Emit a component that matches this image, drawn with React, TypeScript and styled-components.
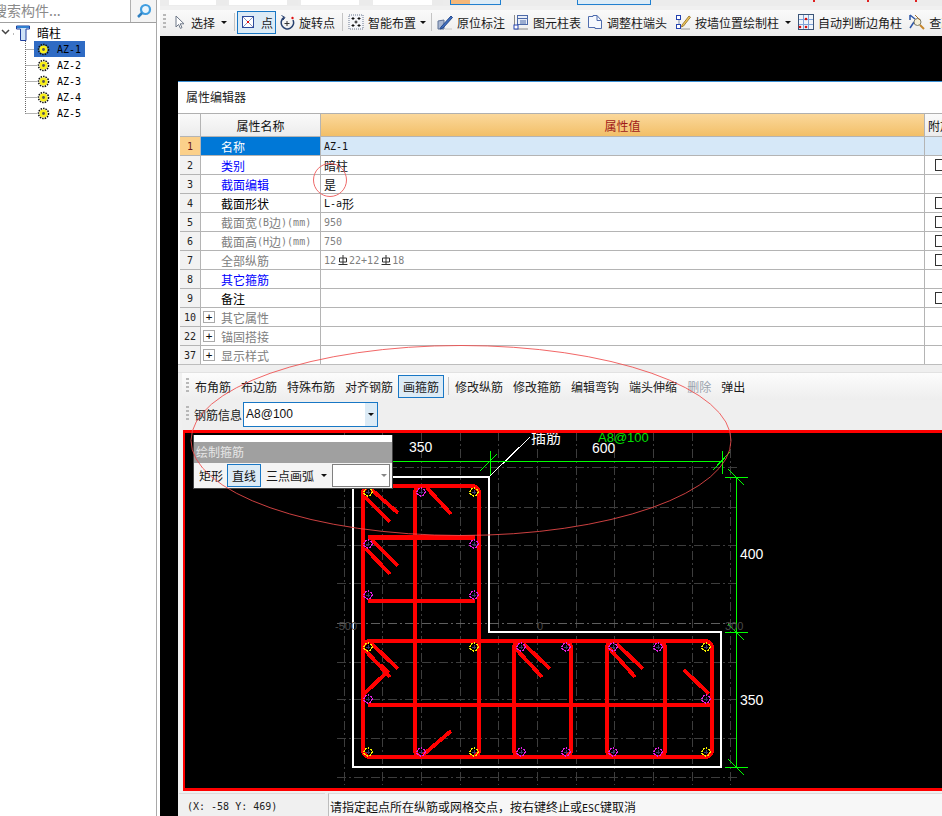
import React from "react";
import styled, { createGlobalStyle } from "styled-components";

const cjk = '"Noto Sans CJK SC", "Liberation Sans", sans-serif';
const mono = '"DejaVu Sans Mono", "Liberation Mono", monospace';

const Global = createGlobalStyle`
  html, body { margin: 0; padding: 0; background: #000; }
  body { font-family: ${cjk}; font-size: 12px; color: #111; }
`;

const Page = styled.div`
  position: relative; display: flex; width: 942px; height: 816px; overflow: hidden; background: #fff;
`;
const Sidebar = styled.aside`
  width: 156px; flex: none; display: flex; flex-direction: column; border-right: 1px solid #a9a9a9; margin-right: 3px; background: #fff;
`;
const SearchBar = styled.div`
  height: 22px; flex: none; display: flex; border-bottom: 1px solid #a0a0a0; overflow: hidden;
`;
const SearchHint = styled.span`
  flex: 1; margin-left: -7px; font-size: 14px; line-height: 20px; color: #8a8a8a; white-space: nowrap;
`;
const SearchButton = styled.div`
  width: 25px; flex: none; display: flex; align-items: center; justify-content: center; border-left: 1px solid #b0b0b0; background: #f4f4f4;
`;
const Tree = styled.div`
  display: flex; flex-direction: column; padding-top: 1px;
`;
const TreeRoot = styled.div`
  height: 17px; display: flex; align-items: center; font-size: 12px; color: #000;
`;
const TreeRootLabel = styled.span`
  margin-left: 3px;
`;
const TreeRow = styled.div`
  height: 16px; display: flex; align-items: center; padding-left: 25px;
`;
const ConnectorSvg = styled.svg`
  flex: none; margin-right: -7px;
`;
const TreeLabel = styled.span<{ $active?: boolean }>`
  width: 51px; height: 16px; display: flex; align-items: center; gap: 7px; padding-left: 3px; box-sizing: border-box;
  font-family: ${mono}; font-size: 10px; color: #000; background: ${p => (p.$active ? "#2f6bc4" : "transparent")};
`;
const GearSvg = styled.svg`
  flex: none;
`;

const Main = styled.main`
  flex: 1; min-width: 0; display: flex; flex-direction: column; background: #f0f0f0;
`;
const TopStrip = styled.div`
  height: 6px; flex: none; display: flex; align-items: flex-start; padding-left: 9px; background: #ececec; overflow: hidden; margin-bottom: 4px;
`;
const StripBox = styled.div<{ $w: number; $ml?: number }>`
  width: ${p => p.$w}px; height: 5px; margin-left: ${p => p.$ml ?? 2}px; flex: none; background: #fff; display: flex; justify-content: flex-end;
  &::after { content: ""; width: 11px; height: 5px; background: #ebebeb; }
`;
const StripActive = styled.div<{ $w: number; $ml: number; $orange?: boolean }>`
  width: ${p => p.$w}px; height: 5px; margin-left: ${p => p.$ml}px; flex: none; box-sizing: border-box;
  border: 1px solid #1f7fd0; border-top: 0; background: #dcebf6; display: flex;
  &::before { content: ""; width: ${p => (p.$orange ? "19px" : "0")}; background: #f5b778; }
`;
const StripMark = styled.i<{ $ml: number; $c: string }>`
  width: 2px; height: 2px; margin-left: ${p => p.$ml}px; flex: none; background: ${p => p.$c};
`;
const Toolbar = styled.div`
  height: 26px; flex: none; box-sizing: border-box; padding-bottom: 2px; display: flex; align-items: center; white-space: nowrap; overflow: hidden;
  background: linear-gradient(#fafafa, #ececec); font-size: 12px; color: #1a1a1a;
`;
const Grip = styled.i<{ $ml: number }>`
  width: 3px; height: 16px; margin-left: ${p => p.$ml}px; flex: none;
  background: repeating-linear-gradient(#b8b8b8 0 2px, transparent 2px 4px);
`;
const Tool = styled.div<{ $ml?: number }>`
  display: flex; align-items: center; gap: 4px; flex: none; margin-left: ${p => p.$ml ?? 0}px;
`;
const IconBox = styled.svg`
  width: 16px; height: 16px; flex: none; display: block;
`;
const Caret = styled.i<{ $ml?: number }>`
  width: 0; height: 0; flex: none; margin-left: ${p => p.$ml ?? 0}px;
  border-left: 3px solid transparent; border-right: 3px solid transparent; border-top: 3px solid #111;
`;
const Sep = styled.i<{ $ml: number }>`
  width: 1px; height: 18px; flex: none; margin-left: ${p => p.$ml}px; background: #c4c4c4;
`;
const PressedTool = styled.div<{ $w: number; $ml: number; $h?: number }>`
  width: ${p => p.$w}px; height: ${p => p.$h ?? 23}px; margin-left: ${p => p.$ml}px; flex: none; box-sizing: border-box;
  display: flex; align-items: center; justify-content: center; gap: 5px;
  border: 1px solid #1877c5; background: #dcebf6;
`;

const Workspace = styled.div`
  flex: 1; min-height: 0; background: #000; padding: 45px 0 0 18px; overflow: hidden;
`;
const Dialog = styled.section`
  width: 764px; height: 735px; display: flex; flex-direction: column; box-sizing: border-box;
  border-top: 1px solid #3b8fd4; background: #f0f0f0;
`;
const DialogTitle = styled.div`
  height: 31px; flex: none; padding-left: 8px; background: #fff; font-size: 12px; line-height: 30px; color: #222;
`;
const Table = styled.div`
  height: 251px; flex: none; padding-left: 2px; background: #fff; border-top: 1px solid #b0b0b0; box-sizing: border-box; overflow: hidden;
`;
const Row = styled.div<{ $head?: boolean }>`
  height: ${p => (p.$head ? 23 : 19)}px; display: grid; grid-template-columns: 21px 120px 604px 30px;
`;
const Cell = styled.div`
  min-width: 0; display: flex; align-items: center; box-sizing: border-box; white-space: nowrap; overflow: hidden;
  border-right: 1px solid #b4b4b4; border-bottom: 1px solid #b4b4b4;
`;
const NumCell = styled(Cell)<{ $active?: boolean }>`
  justify-content: center; font-family: ${mono}; font-size: 10px;
  color: ${p => (p.$active ? "#6a1b1b" : "#222")}; background: ${p => (p.$active ? "#fbd08a" : "#f2f2f2")};
`;
const HeadCell = styled(Cell)<{ $orange?: boolean }>`
  justify-content: center; font-size: 12px; color: ${p => (p.$orange ? "#a01a1a" : "#111")};
  background: ${p => (p.$orange ? "linear-gradient(#fbd89b, #f2bf68)" : "linear-gradient(#fafafa, #ececec)")};
`;
const AttachHead = styled(HeadCell)`
  justify-content: flex-start; padding-left: 3px;
`;
const NameCell = styled(Cell)<{ $color: string; $active?: boolean }>`
  padding-left: 20px; font-size: 12px; color: ${p => (p.$active ? "#fff" : p.$color)};
  background: ${p => (p.$active ? "#0078d7" : "#fff")};
`;
const GroupCell = styled(Cell)`
  padding-left: 2px; gap: 6px; font-size: 12px; color: #808080;
`;
const PlusBox = styled.span`
  width: 12px; height: 12px; flex: none; display: flex; align-items: center; justify-content: center; box-sizing: border-box;
  border: 1px solid #aaa; font-family: ${mono}; font-size: 11px; line-height: 1; color: #111; background: #fff;
`;
const ValueCell = styled(Cell)<{ $muted?: boolean; $active?: boolean }>`
  padding-left: 3px; font-size: 12px; color: ${p => (p.$muted ? "#808080" : "#111")};
  background: ${p => (p.$active ? "#d6e8f8" : "#fff")};
`;
const AttachCell = styled(Cell)<{ $active?: boolean }>`
  padding-left: 10px; border-right: 0; background: ${p => (p.$active ? "#d6e8f8" : "#fff")};
`;
const Check = styled.span`
  width: 12px; height: 12px; flex: none; box-sizing: border-box; border: 1px solid #333; background: #fff;
`;
const Latin = styled.span`
  font-family: ${mono}; font-size: 10px;
`;
const RebarSvg = styled.svg`
  flex: none; margin: 0 1px 0 2px;
`;
const Band = styled.div`
  height: 9px; flex: none; background: #efefef; border-top: 1px solid #bdbdbd; border-bottom: 1px solid #e2e2e2; box-sizing: border-box;
`;
const SubBar = styled.div`
  height: 27px; flex: none; box-sizing: border-box; padding-bottom: 1px; margin-left: 4px; display: flex; align-items: center; white-space: nowrap;
  background: linear-gradient(#fcfcfc, #eeeeee); font-size: 12px; color: #1a1a1a;
`;
const SubItem = styled.span<{ $ml?: number; $off?: boolean }>`
  margin-left: ${p => p.$ml ?? 10}px; flex: none; color: ${p => (p.$off ? "#9aa3ad" : "#1a1a1a")};
`;
const InfoBar = styled.div`
  height: 30px; flex: none; box-sizing: border-box; padding-bottom: 2px; margin-left: 4px; display: flex; align-items: center; background: #efefef; font-size: 12px;
`;
const Combo = styled.div`
  width: 135px; height: 25px; margin-left: 1px; flex: none; display: flex; box-sizing: border-box;
  border: 1px solid #1877c5; background: #fff; font-family: "Liberation Sans", sans-serif; font-size: 12px; line-height: 23px;
`;
const ComboText = styled.span`
  flex: 1; padding-left: 2px;
`;
const ComboArrow = styled.span`
  width: 12px; flex: none; display: flex; align-items: center; justify-content: center; background: #dcebf6;
`;
const CanvasFrame = styled.div`
  position: relative; height: 361px; flex: none; margin-left: 5px; box-sizing: border-box; background: #000; overflow: hidden;
  border: solid #ff0000; border-width: 3px 0 3px 2px;
`;
const Drawing = styled.svg`
  display: block; shape-rendering: crispEdges;
`;
const Palette = styled.div`
  position: absolute; left: 8px; top: 2px; width: 200px; height: 54px; box-sizing: border-box; display: flex; flex-direction: column;
  background: #fff; border: 1px solid #444; border-top: 0;
`;
const PaletteTitle = styled.div`
  height: 21px; margin-top: 7px; flex: none; padding-left: 2px; background: #a0a0a0; color: #e6e6e6; font-size: 12px; line-height: 20px;
`;
const PaletteBody = styled.div`
  flex: 1; display: flex; align-items: center; padding-left: 5px; background: #f4f4f4; font-size: 12px; color: #111;
`;
const PaletteCombo = styled.div`
  width: 58px; height: 23px; margin-left: 5px; flex: none; display: flex; align-items: center; justify-content: flex-end; padding-right: 2px;
  box-sizing: border-box; border: 1px solid #808080; background: #fff;
`;
const GreyCaret = styled(Caret)`
  border-top-color: #888;
`;
const StatusBar = styled.div`
  height: 23px; flex: none; display: flex; margin-top: 2px; padding-left: 1px; white-space: nowrap; font-size: 12px; line-height: 25px;
`;
const CoordCell = styled.div`
  width: 146px; flex: none; padding-left: 8px; box-sizing: border-box; background: #f0f0f0; border-top: 1px solid #dcdcdc;
  font-family: ${mono}; font-size: 10px; color: #222;
`;
const MessageCell = styled.div`
  flex: 1; margin-left: 3px; padding-left: 1px; border-left: 1px solid #bdbdbd; border-top: 1px solid #dcdcdc; background: #f7f7f7; color: #111;
`;
const Annotation = styled.svg`
  position: absolute; left: 0; top: 0; pointer-events: none;
`;

const mixed = (text: string) =>
  text.split(/([\x20-\x7e]+)/).map((part, i) =>
    /^[\x20-\x7e]+$/.test(part) ? <Latin key={i}>{part}</Latin> : part
  );

/* ---------- icons ---------- */
const Svg: React.FC<{ children: React.ReactNode }> = ({ children }) => (
  <IconBox viewBox="0 0 16 16" fill="none">{children}</IconBox>
);
const PointerIcon = () => (
  <Svg><path d="M5 2v11l2.6-2.6 1.8 4 1.6-.8-1.8-3.8H13z" fill="#fff" stroke="#6d7787" /></Svg>
);
const PointIcon = () => (
  <Svg>
    <rect x="2.5" y="2.5" width="11" height="11" fill="#fff" stroke="#2b4a9c" />
    <path d="M3 3l10 10M13 3L3 13" stroke="#8a93b8" />
    <rect x="7" y="7" width="2" height="2" fill="#e01010" />
  </Svg>
);
const RotateIcon = () => (
  <Svg>
    <path d="M5 3.5a6.2 6.2 0 1 0 9 2.5" stroke="#27406f" strokeWidth="1.5" />
    <path d="M2.5 1.5L6 3.5 4 6" stroke="#27406f" />
    <path d="M5.5 9.5h5M8 7v5" stroke="#333" />
    <circle cx="13.5" cy="4" r="1.2" fill="#e01010" />
  </Svg>
);
const SmartIcon = () => (
  <Svg>
    <rect x="1" y="1" width="14" height="14" fill="#f4f6fa" stroke="#6a7890" strokeDasharray="1 1" />
    <path d="M5 3v3M3.500 4.500h3M11 3v3M9.500 4.500h3M8 6.500v3M6.500 8h3M5 10v3M3.500 11.500h3M11 10v3M9.500 11.500h3" stroke="#111" />
  </Svg>
);
const AnnotateIcon = () => (
  <Svg>
    <path d="M1 7l6-1v9H1z" fill="#a9b7d1" stroke="#5f7296" />
    <path d="M4 13L14 2l1.500 1.500L6 14l-3 1z" fill="#3f6fc0" stroke="#25498c" />
    <path d="M8 15h7" stroke="#c8c8c8" />
  </Svg>
);
const TableIcon = () => (
  <Svg>
    <rect x="4.500" y="1.500" width="10" height="9" fill="#e9eef8" stroke="#4d6aa8" />
    <path d="M4.500 4.500h10M7 7h6M7 9h6" stroke="#4d6aa8" />
    <path d="M1.500 1v14H15" stroke="#8a8a8a" />
    <rect x="1" y="11" width="4" height="4" fill="#fff" stroke="#2443b0" />
  </Svg>
);
const AdjustIcon = () => (
  <Svg>
    <path d="M1.500 2.500H6v-1h4l4.500 5V14.500H8v-1H1.500z" fill="#f5f8fd" stroke="#4f6cae" />
    <path d="M10 1.500v5h4.500" stroke="#4f6cae" />
  </Svg>
);
const WallIcon = () => (
  <Svg>
    <path d="M4 2v12" stroke="#7f8faf" />
    <rect x="1.500" y="1.500" width="4" height="4" fill="#fff" stroke="#2443b0" />
    <rect x="1.500" y="10.500" width="4" height="4" fill="#fff" stroke="#2443b0" />
    <path d="M7 11l7-9 1.500 1.200L8.500 12l-2 1z" fill="#f0c658" stroke="#a0803a" />
    <path d="M6 15h9" stroke="#9a9a9a" />
  </Svg>
);
const AutoIcon = () => (
  <Svg>
    <rect x="0.500" y="0.500" width="15" height="15" fill="#f0f5fb" stroke="#3c5578" />
    <path d="M5.500 1v14M10.500 1v14M1 5.500h14M1 10.500h14" stroke="#7fa2d8" />
    <circle cx="8" cy="5" r="1.300" fill="#d81010" />
    <circle cx="2" cy="13" r="1.300" fill="#d81010" />
    <circle cx="8" cy="13" r="1.300" fill="#d81010" />
  </Svg>
);
const InspectIcon = () => (
  <Svg>
    <path d="M1 1l5 4M1 14l4-6M1 1v5" stroke="#2c56a8" strokeWidth="1.500" />
    <circle cx="8.500" cy="8" r="3.500" fill="#f6f0d8" stroke="#7a7a6a" />
    <path d="M11 11l4 4" stroke="#c6862c" strokeWidth="2" />
    <path d="M6 1l5 5" stroke="#a6702c" />
  </Svg>
);
const SearchGlass = () => (
  <svg width="16" height="16" viewBox="0 0 16 16" fill="none">
    <circle cx="9.500" cy="6.500" r="4.500" stroke="#3f9de0" strokeWidth="2.200" fill="#eaf5fc" />
    <path d="M6 10l-4 4" stroke="#2f7fc0" strokeWidth="2.500" />
  </svg>
);
const Chevron = () => (
  <svg width="16" height="16" viewBox="0 0 16 16" fill="none">
    <path d="M2 5l3.500 3.500L9 5" stroke="#444" strokeWidth="1.500" />
    <path d="M13 9h1.500" stroke="#777" strokeDasharray="1 1" />
  </svg>
);
const ColumnIcon = () => (
  <svg width="18" height="16" viewBox="0 0 18 16" fill="none">
    <path d="M0.500 1h13v3h-3.500v11.500H4.500V4H0.500z" fill="#cfe3f7" stroke="#1f3f9e" />
    <path d="M1 2h12" stroke="#2f7fd0" strokeWidth="2" />
  </svg>
);
const Connector: React.FC<{ last?: boolean }> = ({ last }) => (
  <ConnectorSvg width="16" height="16" viewBox="0 0 16 16" fill="none">
    <path d={`M0.500 ${last ? "0V8.500" : "0V16"}M0.500 8.500H12`} stroke="#666" strokeDasharray="1 1" />
  </ConnectorSvg>
);
const Gear = () => (
  <GearSvg width="13" height="13" viewBox="0 0 13 13" fill="none">
    <circle cx="6.500" cy="6.500" r="5" stroke="#111" strokeDasharray="1.500 1" strokeWidth="1.600" />
    <circle cx="6.500" cy="6.500" r="4" fill="#f8ee1a" />
    <circle cx="6.500" cy="6.500" r="1.400" fill="#555" />
  </GearSvg>
);
const RebarGlyph = () => (
  <RebarSvg width="10" height="12" viewBox="0 0 10 12" fill="none">
    <path d="M1.500 8V4h7v4zM5 1v9M0.500 10.500h9" stroke="#333" />
  </RebarSvg>
);

/* ---------- data ---------- */
type TableRow = {
  n: number; name: string; color?: string; value?: string; muted?: boolean; check?: boolean;
  group?: boolean; active?: boolean; rebar?: boolean;
};
const rows: TableRow[] = [
  { n: 1, name: "名称", value: "AZ-1", active: true },
  { n: 2, name: "类别", color: "#0000ff", value: "暗柱", check: true },
  { n: 3, name: "截面编辑", color: "#0000ff", value: "是" },
  { n: 4, name: "截面形状", color: "#000", value: "L-a形", check: true },
  { n: 5, name: "截面宽(B边)(mm)", color: "#808080", value: "950", muted: true, check: true },
  { n: 6, name: "截面高(H边)(mm)", color: "#808080", value: "750", muted: true, check: true },
  { n: 7, name: "全部纵筋", color: "#808080", muted: true, check: true, rebar: true },
  { n: 8, name: "其它箍筋", color: "#0000ff" },
  { n: 9, name: "备注", color: "#000", check: true },
  { n: 10, name: "其它属性", group: true },
  { n: 22, name: "锚固搭接", group: true },
  { n: 37, name: "显示样式", group: true },
];

const vGrid = [344, 382.6, 421, 460, 498, 537, 576, 614, 653, 692, 730];
const hGrid = [467, 507, 545, 583, 623, 662, 699, 738, 777];
const hooks = [
  [372, 490, 398, 513], [365, 497, 390, 522], [372, 540, 398, 566], [365, 548, 390, 574],
  [427, 488, 451, 514], [371, 643, 398, 669], [365, 650, 390, 677], [363, 695, 387, 672],
  [381, 665, 389, 673], [423, 755, 451, 731], [524, 644, 550, 669], [515, 648, 542, 677],
  [617, 644, 643, 669], [609, 648, 635, 677], [684, 670, 709, 694],
];
const yellowDots = [[368, 492], [474, 492], [368, 647], [474, 647], [368, 752], [474, 752], [706, 647], [706, 752]];
const magentaDots = [
  [421, 492], [368, 544], [474, 544], [368, 595], [474, 595], [521, 647], [566, 647], [613, 647], [658, 647],
  [368, 699], [706, 699], [421, 752], [521, 752], [566, 752], [613, 752], [658, 752],
];
const greenLines = [
  [385, 461.5, 722, 461.5], [490.5, 451, 490.5, 475], [480, 471, 497, 454], [722.5, 451, 722.5, 474], [713, 470, 730, 452],
  [736.5, 477, 736.5, 767], [725, 477.5, 748, 477.5], [728, 469, 744, 485], [725, 632.5, 748, 632.5], [728, 624, 744, 640],
  [725, 767.5, 748, 767.5], [728, 759, 744, 775],
];

const Dot: React.FC<{ x: number; y: number; c: string }> = ({ x, y, c }) => (
  <g>
    <circle cx={x} cy={y} r="4" stroke={c} strokeWidth="1.500" strokeDasharray="2 1" />
    <path d={`M${x - 2} ${y}h4M${x} ${y - 2}v4`} stroke="#3a3a70" />
  </g>
);

const Plan = () => (
  <Drawing width="757" height="355" viewBox="185 433 757 355" fill="none">
    {vGrid.map(x => (
      <path key={x} d={`M${x} 432V785`} stroke="#3d3d3d" strokeDasharray="9 3 2 3" />
    ))}
    {hGrid.map(y => (
      <path key={y} d={`M337 ${y}H738`} stroke={y === 623 ? "#5e5e5e" : "#3d3d3d"} strokeDasharray="9 3 2 3" />
    ))}
    <path d="M353 477H489V632H721V767H353Z" stroke="#fff" strokeWidth="2" />
    <path d="M490 476L530 437" stroke="#fff" />
    {greenLines.map(([a, b, c, d], i) => (
      <path key={i} d={`M${a} ${b}L${c} ${d}`} stroke="#00ff00" />
    ))}
    <g stroke="#ff0000" strokeWidth="4.200">
      <rect x="363" y="486" width="116" height="271" rx="7" />
      <rect x="415" y="486" width="64" height="271" rx="7" />
      <rect x="363" y="641" width="349" height="116" rx="7" />
      <rect x="514" y="641" width="57" height="116" rx="7" />
      <rect x="607" y="641" width="58" height="116" rx="7" />
      <path d="M368 537.500H475M368 601H475M368 705H710" />
      {hooks.map(([a, b, c, d], i) => (
        <path key={i} d={`M${a} ${b}L${c} ${d}`} strokeWidth="3.800" />
      ))}
    </g>
    {yellowDots.map(([x, y]) => <Dot key={`${x}-${y}`} x={x} y={y} c="#f4f000" />)}
    {magentaDots.map(([x, y]) => <Dot key={`${x}-${y}`} x={x} y={y} c="#e020e0" />)}
    <g fontFamily='"Liberation Sans", sans-serif' fontSize="14" fill="#fff">
      <text x="409" y="452">350</text>
      <text x="592" y="453">600</text>
      <text x="740" y="559">400</text>
      <text x="740" y="705">350</text>
    </g>
    <text x="598" y="442" fontFamily='"Liberation Sans", sans-serif' fontSize="13" fill="#00e000">A8@100</text>
    <text x="531" y="443" fontFamily={cjk} fontSize="15" fill="#fff">插筋</text>
    <g fontFamily='"Liberation Sans", sans-serif' fontSize="11" fill="#4a4a4a">
      <text x="335" y="630">-500</text>
      <text x="537" y="630">0</text>
      <text x="725" y="630">300</text>
    </g>
  </Drawing>
);

export default function App() {
  return (
    <Page>
      <Global />
      <Sidebar>
        <SearchBar>
          <SearchHint>搜索构件...</SearchHint>
          <SearchButton><SearchGlass /></SearchButton>
        </SearchBar>
        <Tree>
          <TreeRoot>
            <Chevron />
            <ColumnIcon />
            <TreeRootLabel>暗柱</TreeRootLabel>
          </TreeRoot>
          {[1, 2, 3, 4, 5].map(i => (
            <TreeRow key={i}>
              <Connector last={i === 5} />
              <TreeLabel $active={i === 1}>
                <Gear />
                {`AZ-${i}`}
              </TreeLabel>
            </TreeRow>
          ))}
        </Tree>
      </Sidebar>

      <Main>
        <TopStrip>
          <StripBox $w={58} $ml={0} />
          <StripBox $w={69} />
          <StripBox $w={69} $ml={3} />
          <StripBox $w={70} $ml={3} />
          <StripActive $w={51} $ml={7} $orange />
          <StripActive $w={74} $ml={76} />
          <StripMark $ml={162} $c="#e02020" />
          <StripMark $ml={52} $c="#e02020" />
          <StripMark $ml={46} $c="#e02020" />
        </TopStrip>
        <Toolbar>
          <Grip $ml={3} />
          <Tool $ml={5}><PointerIcon />选择<Caret $ml={2} /></Tool>
          <Sep $ml={7} />
          <PressedTool $w={39} $ml={2}><PointIcon />点</PressedTool>
          <Tool $ml={3}><RotateIcon />旋转点</Tool>
          <Sep $ml={7} />
          <Tool $ml={5}><SmartIcon />智能布置<Caret /></Tool>
          <Sep $ml={5} />
          <Tool $ml={5}><AnnotateIcon />原位标注</Tool>
          <Tool $ml={8}><TableIcon />图元柱表</Tool>
          <Tool $ml={6}><AdjustIcon />调整柱端头</Tool>
          <Tool $ml={8}><WallIcon />按墙位置绘制柱<Caret $ml={2} /></Tool>
          <Tool $ml={7}><AutoIcon />自动判断边角柱</Tool>
          <Tool $ml={7}><InspectIcon />查改标注</Tool>
        </Toolbar>

        <Workspace>
          <Dialog>
            <DialogTitle>属性编辑器</DialogTitle>
            <Table>
              <Row $head>
                <HeadCell />
                <HeadCell>属性名称</HeadCell>
                <HeadCell $orange>属性值</HeadCell>
                <AttachHead>附加</AttachHead>
              </Row>
              {rows.map(r => (
                <Row key={r.n}>
                  <NumCell $active={r.active}>{r.n}</NumCell>
                  {r.group ? (
                    <GroupCell><PlusBox>+</PlusBox>{r.name}</GroupCell>
                  ) : (
                    <NameCell $color={r.color ?? "#000"} $active={r.active}>{mixed(r.name)}</NameCell>
                  )}
                  <ValueCell $muted={r.muted} $active={r.active}>
                    {r.rebar ? (
                      <>
                        <Latin>12</Latin><RebarGlyph /><Latin>22+12</Latin><RebarGlyph /><Latin>18</Latin>
                      </>
                    ) : (
                      mixed(r.value ?? "")
                    )}
                  </ValueCell>
                  <AttachCell $active={r.active}>{r.check && <Check />}</AttachCell>
                </Row>
              ))}
            </Table>
            <Band />
            <SubBar>
              <Grip $ml={4} />
              <SubItem $ml={6}>布角筋</SubItem>
              <SubItem>布边筋</SubItem>
              <SubItem>特殊布筋</SubItem>
              <SubItem>对齐钢筋</SubItem>
              <PressedTool $w={46} $ml={5}>画箍筋</PressedTool>
              <Sep $ml={4} />
              <SubItem $ml={6}>修改纵筋</SubItem>
              <SubItem>修改箍筋</SubItem>
              <SubItem>编辑弯钩</SubItem>
              <SubItem>端头伸缩</SubItem>
              <SubItem $off>删除</SubItem>
              <SubItem>弹出</SubItem>
            </SubBar>
            <InfoBar>
              <Grip $ml={4} />
              <SubItem $ml={5}>钢筋信息</SubItem>
              <Combo>
                <ComboText>A8@100</ComboText>
                <ComboArrow><Caret /></ComboArrow>
              </Combo>
            </InfoBar>
            <CanvasFrame>
              <Plan />
              <Palette>
                <PaletteTitle>绘制箍筋</PaletteTitle>
                <PaletteBody>
                  <span>矩形</span>
                  <PressedTool $w={34} $h={23} $ml={4}>直线</PressedTool>
                  <SubItem $ml={5}>三点画弧</SubItem>
                  <Caret $ml={7} />
                  <PaletteCombo><GreyCaret /></PaletteCombo>
                </PaletteBody>
              </Palette>
            </CanvasFrame>
            <StatusBar>
              <CoordCell>(X: -58 Y: 469)</CoordCell>
              <MessageCell>{mixed("请指定起点所在纵筋或网格交点，按右键终止或ESC键取消")}</MessageCell>
            </StatusBar>
          </Dialog>
        </Workspace>
      </Main>

      <Annotation width="942" height="816" viewBox="0 0 942 816" fill="none">
        <ellipse cx="461" cy="440.500" rx="270" ry="95" stroke="#ee4b4b" strokeOpacity="0.85" />
        <circle cx="330" cy="180" r="16.500" stroke="#ee6a6a" />
      </Annotation>
    </Page>
  );
}
